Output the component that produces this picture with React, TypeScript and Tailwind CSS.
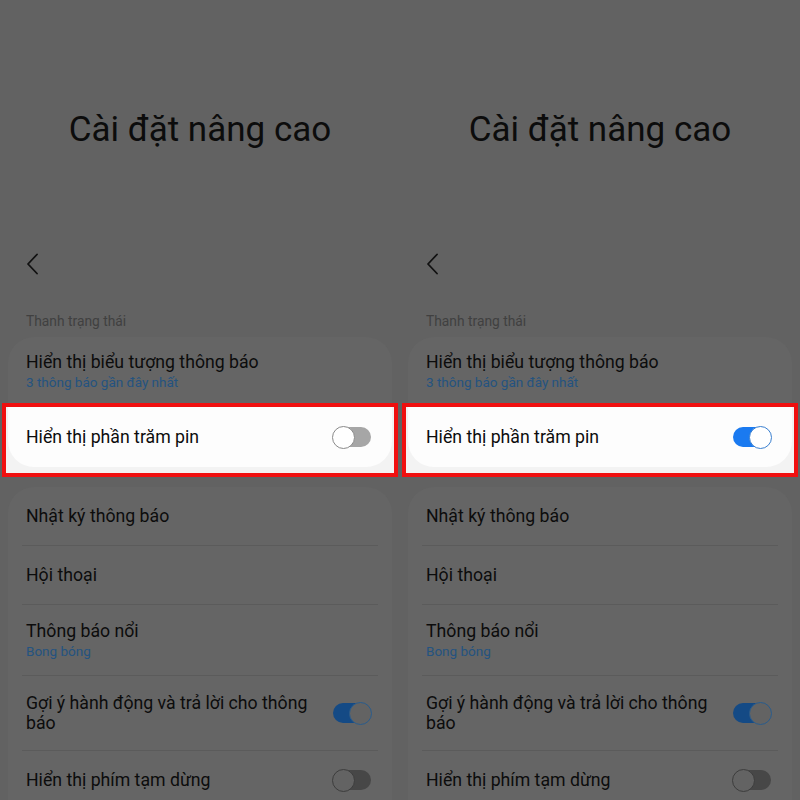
import React from 'react';

type ToggleTone = 'dim' | 'bright';

function Toggle({ on, tone }: { on: boolean; tone: ToggleTone }) {
  const track =
    tone === 'bright'
      ? on
        ? 'bg-[#1a7af0]'
        : 'bg-[#a6a6a6]'
      : on
        ? 'bg-[#144a85]'
        : 'bg-[#474747]';
  const knob =
    tone === 'bright'
      ? on
        ? 'bg-white border-[#3a80d0]'
        : 'bg-white border-[#8a8a8a]'
      : on
        ? 'bg-[#636363] border-[#2a5c8c]'
        : 'bg-[#636363] border-[#3d3d3d]';
  return (
    <div className="relative h-[23px] w-[40px] shrink-0">
      <div className={`absolute left-[1px] right-[1px] top-[1.5px] h-[20px] rounded-full ${track}`} />
      <div
        className={`absolute top-0 size-[23px] rounded-full border-[1.5px] ${knob} ${on ? 'right-0' : 'left-0'}`}
      />
    </div>
  );
}

function Divider() {
  return <div className="mx-[14px] h-px shrink-0 bg-[#5b5b5b]" />;
}

function Panel({ percentOn }: { percentOn: boolean }) {
  return (
    <div className="flex h-[800px] w-[400px] shrink-0 flex-col overflow-hidden bg-[#626262] text-[#0c0c0c]">
      {/* Title */}
      <div className="mt-[108px] shrink-0 text-center text-[35px] leading-[44px]">Cài đặt nâng cao</div>

      {/* Back */}
      <div className="mt-[101px] h-[20px] shrink-0 pl-[26px]">
        <svg width="14" height="22" viewBox="0 0 14 22" fill="none">
          <polyline points="11,1.5 2,11 11,20.5" stroke="#111111" strokeWidth="1.8" strokeLinecap="round" strokeLinejoin="round" />
        </svg>
      </div>

      {/* Section header */}
      <div className="mt-[40px] shrink-0 pl-[26px] text-[13.8px] leading-[16px] text-[#404040]">Thanh trạng thái</div>

      {/* Card 1 */}
      <div className="mx-2 mt-2 h-[66px] shrink-0 rounded-t-[26px] bg-[#656565] pl-[18px] pt-[15px]">
        <div className="text-[17.7px] leading-[20px]">Hiển thị biểu tượng thông báo</div>
        <div className="mt-px text-[13.5px] leading-[18px] text-[#245380]">3 thông báo gần đây nhất</div>
      </div>

      {/* Highlighted row */}
      <div className="mx-[2px] shrink-0 border-4 border-[#f01010] bg-[#f3f3f3] pb-[6px]">
        <div className="mx-[2px] flex h-[60px] items-center justify-between rounded-b-[26px] bg-[#fdfdfd] pl-[18px] pr-5">
          <span className="text-[17.7px] leading-[20px]">Hiển thị phần trăm pin</span>
          <Toggle on={percentOn} tone="bright" />
        </div>
      </div>

      {/* Card 2 */}
      <div className="mx-2 mt-[10px] shrink-0 rounded-t-[26px] bg-[#656565]">
        <div className="flex h-[58px] items-center pl-[18px] text-[17.7px]">Nhật ký thông báo</div>
        <Divider />
        <div className="flex h-[58px] items-center pl-[18px] text-[17.7px]">Hội thoại</div>
        <Divider />
        <div className="flex h-[70px] flex-col justify-center pl-[18px]">
          <div className="text-[17.7px] leading-[20px]">Thông báo nổi</div>
          <div className="mt-px text-[13.5px] leading-[18px] text-[#245380]">Bong bóng</div>
        </div>
        <Divider />
        <div className="flex h-[74px] items-center justify-between pl-[18px] pr-5">
          <span className="w-[300px] text-[17.7px] leading-[20px]">Gợi ý hành động và trả lời cho thông báo</span>
          <Toggle on tone="dim" />
        </div>
        <Divider />
        <div className="flex h-[58px] items-center justify-between pl-[18px] pr-5">
          <span className="text-[17.7px] leading-[20px]">Hiển thị phím tạm dừng</span>
          <Toggle on={false} tone="dim" />
        </div>
      </div>
    </div>
  );
}

export default function App() {
  return (
    <div className="flex h-[800px] w-[800px] overflow-hidden font-['Roboto','Noto_Sans',sans-serif]">
      <Panel percentOn={false} />
      <Panel percentOn />
    </div>
  );
}
